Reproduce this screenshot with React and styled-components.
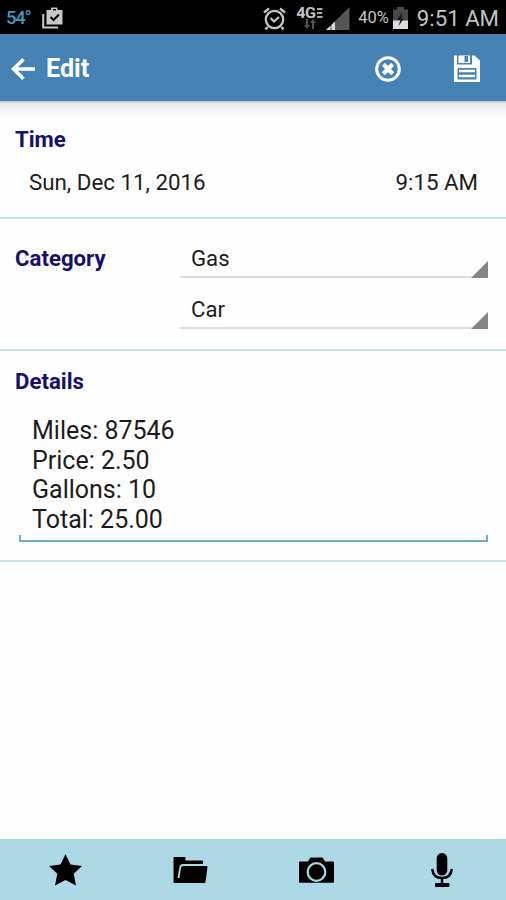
import React from 'react';
import styled, { createGlobalStyle } from 'styled-components';

const GlobalStyle = createGlobalStyle`
  * {
    box-sizing: border-box;
  }
  body {
    margin: 0;
    background: #fff;
    font-family: Roboto, sans-serif;
  }
`;

const Screen = styled.div`
  display: flex;
  flex-direction: column;
  width: 506px;
  height: 900px;
  overflow: hidden;
  background: #fefefe;
`;

const StatusBar = styled.div`
  display: flex;
  align-items: center;
  justify-content: space-between;
  height: 34px;
  padding: 2px 7px 0 6px;
  background: #000;
`;

const StatusGroup = styled.div`
  display: flex;
  align-items: center;
`;

const StatusText = styled.span`
  margin-left: ${({ $gap }) => $gap || 0}px;
  font-size: ${({ $size }) => $size}px;
  font-weight: ${({ $weight }) => $weight || 400};
  line-height: 32px;
  letter-spacing: ${({ $spacing }) => $spacing || 0}px;
  color: ${({ $color }) => $color || '#c4c4c4'};
  white-space: nowrap;
`;

const Icon = styled.svg`
  display: block;
  flex: none;
  margin-left: ${({ $gap }) => $gap || 0}px;
`;

const Network = styled.div`
  display: flex;
  flex-direction: column;
  align-items: center;
  width: 27px;
  margin: 0 0 1px 10px;
`;

const NetworkName = styled.div`
  display: flex;
  align-items: center;
  height: 12px;
  font-size: 14px;
  font-weight: 700;
  line-height: 12px;
  letter-spacing: -0.5px;
  color: #c4c4c4;
  transform: scaleX(1.15);
`;

const Toolbar = styled.header`
  display: flex;
  align-items: center;
  height: 67px;
  padding: 2px 26px 0 11px;
  background: #4682b4;
  color: #fff;
`;

const Title = styled.h1`
  flex: 1;
  margin: 1px 0 0 11px;
  font-size: 25.2px;
  font-weight: 700;
  line-height: 30px;
`;

const Content = styled.main`
  flex: 1;
  padding-top: 2px;
  background: linear-gradient(#b4bcc4, #e6e6e6 2px, #f3f3f3 8px, #fefefe 17px);
`;

const Section = styled.section`
  display: ${({ $row }) => ($row ? 'flex' : 'block')};
  height: ${({ $height }) => $height}px;
  padding: ${({ $top }) => $top}px 18px 0 15px;
  border-bottom: 2px solid #c5e2ef;
`;

const Label = styled.h2`
  margin: 0;
  width: 165px;
  font-size: 22.2px;
  font-weight: 700;
  line-height: 26px;
  color: #15106e;
`;

const DateRow = styled.div`
  display: flex;
  justify-content: space-between;
  padding: 17px 10px 0 14px;
  font-size: 22.3px;
  line-height: 26px;
  color: #1c1c1c;
`;

const Fields = styled.div`
  flex: 1;
`;

const Select = styled.div`
  display: flex;
  align-items: flex-end;
  justify-content: space-between;
  height: 33px;
  margin-bottom: 18px;
  padding-left: 11px;
  border-bottom: 2px solid #dcdcdc;
  font-size: 22.2px;
  line-height: 26px;
  color: #1c1c1c;
`;

const SelectText = styled.span`
  align-self: flex-start;
`;

const Corner = styled.span`
  width: 17px;
  height: 17px;
  margin-bottom: -2px;
  background: #858585;
  clip-path: polygon(100% 0, 100% 100%, 0 100%);
`;

const Editor = styled.div`
  margin: 22px 0 0 4px;
  padding-left: 13px;
  font-size: 25px;
  line-height: 29.6px;
  color: #1c1c1c;
  white-space: pre-line;
`;

const Underline = styled.div`
  height: 7px;
  margin: 1px 0 0 4px;
  border: 2px solid #6caed0;
  border-top: 0;
`;

const BottomBar = styled.nav`
  display: grid;
  grid-template-columns: 131px 119px 132px 119px;
  align-items: center;
  justify-items: center;
  height: 61px;
  background: #add8e6;
`;

const NOTES = `Miles: 87546
Price: 2.50
Gallons: 10
Total: 25.00`;

const ClipboardIcon = () => (
  <Icon $gap={11} width="21" height="22" viewBox="0 0 21 22">
    <path d="M1.2 7v13.5H16" fill="none" stroke="#c8c8c8" strokeWidth="2" />
    <path d="M4.500 3H9V1.500Q9 .5 10 .5h4.500q1 0 1 1V3H20.500v14.500h-16zM11 2v1.500h3V2z" fill="#c8c8c8" />
    <path d="M8.500 10l3 3 5.500-5.500" fill="none" stroke="#000" strokeWidth="2" />
  </Icon>
);

const AlarmIcon = () => (
  <Icon width="23" height="23" viewBox="0 0 23 23" fill="none" stroke="#c4c4c4" strokeWidth="2.300">
    <circle cx="11.500" cy="12.500" r="8.700" />
    <path d="M1 5.500l5-4M22 5.500l-5-4M4.500 20l-2 2.500M18.500 20l2 2.500M7.500 11l3.500 3.500 5-4.500" />
  </Icon>
);

// three short bars beside the 4G mark
const LteBars = () => (
  <Icon $gap={1} width="5" height="10" viewBox="0 0 5 10" fill="#a8a8a8">
    <path d="M0 0h5v2H0zM0 4h4.500v2H0zM0 8h5v2H0z" />
  </Icon>
);

const DataArrows = () => (
  <Icon width="12" height="10" viewBox="0 0 12 10" fill="#555">
    <path d="M2 0h2v6h2L3 10 0 6h2zM8 10V4H6l3-4 3 4h-2v6z" />
  </Icon>
);

const SignalIcon = () => (
  <Icon $gap={3} width="24" height="23" viewBox="0 0 24 23">
    <path d="M23.500 0v23H0z" fill="#555" />
    <path d="M9 14.500V23H5.500v-5.200zM4.500 18.700V23H0z" fill="#d8d8d8" />
  </Icon>
);

const BatteryIcon = () => (
  <Icon $gap={4} width="15" height="22" viewBox="0 0 15 22">
    <path d="M0 2.500h4V0h7v2.500h4V22H0z" fill="#484848" />
    <path d="M0 13.500h15V22H0z" fill="#dcdcdc" />
    <path d="M9.500 5L4 13h3.500L5.500 19 11 11.500H8z" fill="#151515" />
  </Icon>
);

const BackIcon = () => (
  <Icon width="24" height="22" viewBox="0 0 24 22" fill="none" stroke="#fff" strokeWidth="3.600">
    <path d="M12.500 1.300L2.500 11l10 9.700M3 11h21" />
  </Icon>
);

const CancelIcon = () => (
  <Icon width="26" height="26" viewBox="0 0 26 26" fill="none" stroke="#fff">
    <circle cx="13" cy="13" r="11.300" strokeWidth="3" />
    <path d="M8.300 8.300l9.400 9.400M17.700 8.300l-9.400 9.400" strokeWidth="4.300" />
  </Icon>
);

const SaveIcon = () => (
  <Icon $gap={53} width="26" height="27" viewBox="0 0 26 27">
    <path
      fill="#fff"
      fillRule="evenodd"
      d="M0 .5h3v9h15v-9h2.500l5.500 5V27H0zM4.500 .5H16V8H4.500zM10.500 1v6H14V1zM3.500 13v11.500h19V13z"
    />
    <path d="M5 16h16M5 21h16" stroke="#fff" strokeWidth="2.300" />
  </Icon>
);

const StarIcon = () => (
  <Icon width="33" height="32" viewBox="0 0 33 32">
    <path d="M16.500 0l5 10.500L33 12l-8.300 7.800L27 31.500 16.500 26 6 31.500l2.300-11.700L0 12l11.500-1.500z" />
  </Icon>
);

const FolderIcon = () => (
  <Icon width="35" height="28" viewBox="0 0 35 28">
    <path d="M.5 2Q.5 1 1.500 1h10q1 0 1 1v2.500H29q1 0 1 1V8H10Q7 8 6.500 11L4.500 22h2L8 12q.3-2 2.500-2H33.500q1 0 1 1L32.500 26q-.3 1-1.300 1H1.500q-1 0-1-1z" />
  </Icon>
);

const CameraIcon = () => (
  <Icon width="35" height="26" viewBox="0 0 35 26">
    <path d="M1 4.500h8L11 1q.3-.6 1-.6h11q.7 0 1 .6l2 3.500h8q1 0 1 1V25q0 .8-1 .8H1q-1 0-1-.8V5.500q0-1 1-1z" />
    <circle cx="17.500" cy="15" r="8.800" fill="none" stroke="#add8e6" strokeWidth="2.200" />
  </Icon>
);

const MicIcon = () => (
  <Icon width="22" height="34" viewBox="0 0 22 34">
    <rect x="5.700" y="0" width="10.600" height="22.500" rx="5.300" />
    <path d="M1.200 16q1 9 9.800 9t9.800-9M11 25v6" fill="none" stroke="#000" strokeWidth="2.400" />
    <rect x="4" y="30" width="14.500" height="4" rx="1" />
  </Icon>
);

const Dropdown = ({ value }) => (
  <Select>
    <SelectText>{value}</SelectText>
    <Corner />
  </Select>
);

const App = () => {
  return (
    <Screen>
      <GlobalStyle />
      <StatusBar>
        <StatusGroup>
          <StatusText $size={18.500} $weight={500} $color="#3c9cc4" $spacing={-1.2}>54°</StatusText>
          <ClipboardIcon />
        </StatusGroup>
        <StatusGroup>
          <AlarmIcon />
          <Network>
            <NetworkName>
              4G
              <LteBars />
            </NetworkName>
            <DataArrows />
          </Network>
          <SignalIcon />
          <StatusText $size={16.500} $gap={8}>40%</StatusText>
          <BatteryIcon />
          <StatusText $size={22.200} $gap={9}>9:51 AM</StatusText>
        </StatusGroup>
      </StatusBar>
      <Toolbar>
        <BackIcon />
        <Title>Edit</Title>
        <CancelIcon />
        <SaveIcon />
      </Toolbar>
      <Content>
        <Section $height={116} $top={23}>
          <Label>Time</Label>
          <DateRow>
            <span>Sun, Dec 11, 2016</span>
            <span>9:15 AM</span>
          </DateRow>
        </Section>
        <Section $row $height={132} $top={26}>
          <Label>Category</Label>
          <Fields>
            <Dropdown value="Gas" />
            <Dropdown value="Car" />
          </Fields>
        </Section>
        <Section $height={211} $top={17}>
          <Label>Details</Label>
          <Editor>{NOTES}</Editor>
          <Underline />
        </Section>
      </Content>
      <BottomBar>
        <StarIcon />
        <FolderIcon />
        <CameraIcon />
        <MicIcon />
      </BottomBar>
    </Screen>
  );
};

export default App;
